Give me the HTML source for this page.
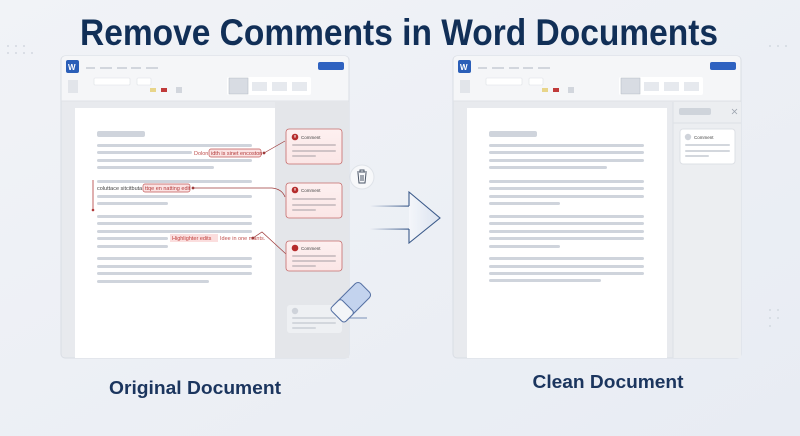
<!DOCTYPE html>
<html><head><meta charset="utf-8"><style>
html,body{margin:0;padding:0;width:800px;height:436px;overflow:hidden;background:#eef1f6}
svg{display:block}
text{font-family:"Liberation Sans",sans-serif}
</style></head><body>
<svg width="800" height="436" viewBox="0 0 800 436" xmlns="http://www.w3.org/2000/svg">
<defs>
<linearGradient id="bg" x1="0" y1="0" x2="1" y2="1"><stop offset="0" stop-color="#f1f3f7"/><stop offset="1" stop-color="#e8ecf3"/></linearGradient>
<linearGradient id="ar" x1="0" y1="0" x2="1" y2="0"><stop offset="0" stop-color="#f4f6fa"/><stop offset="1" stop-color="#dbe3f0"/></linearGradient>
<linearGradient id="al" x1="0" y1="0" x2="1" y2="0"><stop offset="0" stop-color="#3b5a8a" stop-opacity="0"/><stop offset="1" stop-color="#3b5a8a"/></linearGradient>
<linearGradient id="cm" x1="0" y1="0" x2="0" y2="1"><stop offset="0" stop-color="#fdf0f0"/><stop offset="1" stop-color="#fbe6e6"/></linearGradient>
</defs>
<rect width="800" height="436" fill="url(#bg)"/>
<g fill="#d3d8e0">
<circle cx="8" cy="46" r="1"/><circle cx="16" cy="46" r="1"/><circle cx="24" cy="46" r="1"/><circle cx="8" cy="53" r="1"/><circle cx="16" cy="53" r="1"/><circle cx="24" cy="53" r="1"/><circle cx="32" cy="53" r="1"/>
<circle cx="770" cy="46" r="1"/><circle cx="778" cy="46" r="1"/><circle cx="786" cy="46" r="1"/><circle cx="770" cy="310" r="1"/><circle cx="778" cy="310" r="1"/><circle cx="770" cy="318" r="1"/><circle cx="778" cy="318" r="1"/><circle cx="770" cy="326" r="1"/>
</g>
<text x="399" y="45" text-anchor="middle" font-size="37" font-weight="bold" fill="#112f57" textLength="638" lengthAdjust="spacingAndGlyphs">Remove Comments in Word Documents</text>

<!-- LEFT WINDOW -->
<g>
<rect x="61" y="56" width="288" height="302" rx="4" fill="#e8eaee" stroke="#d9dde4"/>
<path d="M61.5 101 V60 a4 4 0 0 1 4 -4 H344.5 a4 4 0 0 1 4 4 V101 Z" fill="#f5f6f8"/>
<line x1="61" y1="101" x2="349" y2="101" stroke="#dfe2e7"/>
<rect x="66" y="60" width="13" height="13" rx="2" fill="#2b5fb8"/><text x="68" y="70" font-size="8" font-weight="bold" fill="#fff">W</text>
<rect x="318" y="62" width="26" height="8" rx="2" fill="#2f62c0"/>
<g stroke="#d2d6dd" stroke-width="2"><line x1="86" y1="68" x2="95" y2="68"/><line x1="100" y1="68" x2="112" y2="68"/><line x1="117" y1="68" x2="127" y2="68"/><line x1="131" y1="68" x2="141" y2="68"/><line x1="146" y1="68" x2="158" y2="68"/></g>
<rect x="68" y="80" width="10" height="13" fill="#e2e5ea"/>
<rect x="94" y="78" width="36" height="7" rx="1" fill="#fff" stroke="#dde0e5" stroke-width=".6"/>
<rect x="137" y="78" width="14" height="7" rx="1" fill="#fff" stroke="#dde0e5" stroke-width=".6"/>
<rect x="150" y="88" width="6" height="4" fill="#e8d58a"/><rect x="161" y="88" width="6" height="4" fill="#c03a3a"/>
<rect x="176" y="87" width="6" height="6" fill="#d2d6dd"/>
<rect x="227" y="77" width="84" height="18" rx="2" fill="#fff"/>
<rect x="229" y="78" width="19" height="16" fill="#d8dce3" stroke="#b9bfc9" stroke-width=".6"/>
<rect x="252" y="82" width="15" height="9" fill="#e6e9ee"/><rect x="272" y="82" width="15" height="9" fill="#e6e9ee"/><rect x="292" y="82" width="15" height="9" fill="#e6e9ee"/>
<rect x="275" y="102" width="74" height="256" fill="#e4e6ea"/>
<rect x="75" y="108" width="200" height="250" fill="#fff"/>
<g fill="#cfd4dc">
<rect x="97" y="131" width="48" height="6" rx="2"/>
<rect x="97" y="144" width="155" height="3" rx="1.5"/><rect x="97" y="151" width="95" height="3" rx="1.5"/><rect x="97" y="159" width="155" height="3" rx="1.5"/><rect x="97" y="166" width="117" height="3" rx="1.5"/>
<rect x="97" y="180" width="155" height="3" rx="1.5"/><rect x="97" y="195" width="155" height="3" rx="1.5"/><rect x="97" y="202" width="71" height="3" rx="1.5"/>
<rect x="97" y="215" width="155" height="3" rx="1.5"/><rect x="97" y="222" width="155" height="3" rx="1.5"/><rect x="97" y="230" width="155" height="3" rx="1.5"/><rect x="97" y="237" width="71" height="3" rx="1.5"/><rect x="97" y="245" width="71" height="3" rx="1.5"/>
<rect x="97" y="257" width="155" height="3" rx="1.5"/><rect x="97" y="265" width="155" height="3" rx="1.5"/><rect x="97" y="272" width="155" height="3" rx="1.5"/><rect x="97" y="280" width="112" height="3" rx="1.5"/>
</g>
<text x="194" y="155" font-size="5.5" fill="#c0504d">Dolon</text>
<rect x="209" y="149" width="52" height="8" rx="2" fill="#fbe3e3" stroke="#c05555" stroke-width=".7"/>
<text x="211" y="155" font-size="5.5" fill="#b23a3a">idth is sinet encoston</text>
<text x="97" y="190" font-size="5.5" fill="#444">coluttace sitcitbuta</text>
<rect x="143" y="184" width="47" height="8" rx="2" fill="#fbe3e3" stroke="#c05555" stroke-width=".7"/>
<text x="145" y="190" font-size="5.5" fill="#b23a3a">ttqe en natting edit</text>
<rect x="170" y="234" width="48" height="8" fill="#fbdede"/>
<text x="172" y="240" font-size="5.5" fill="#c0403d">Highlighter edits</text>
<text x="220" y="240" font-size="5.5" fill="#c0504d">Idee in one mants.</text>
<line x1="93" y1="180" x2="93" y2="210" stroke="#b03a3a" stroke-width=".8"/><circle cx="93" cy="210" r="1.3" fill="#b03a3a"/>
<g stroke="#9e3b3b" stroke-width=".7" fill="none">
<path d="M264 153 L285 141"/><path d="M193 188 L272 188 Q282 189 285 197"/><path d="M253 238 L262 232 L286 254"/>
</g>
<circle cx="264" cy="153" r="1.4" fill="#9e3b3b"/><circle cx="193" cy="188" r="1.4" fill="#9e3b3b"/><circle cx="253" cy="238" r="1.4" fill="#9e3b3b"/>
<g stroke="#c56b6b" stroke-width=".8" fill="url(#cm)">
<rect x="286" y="129" width="56" height="35" rx="3"/><rect x="286" y="183" width="56" height="35" rx="3"/><rect x="286" y="241" width="56" height="30" rx="3"/>
</g>
<g fill="#b52c2c"><circle cx="295" cy="137" r="3.3"/><circle cx="295" cy="190" r="3.3"/><circle cx="295" cy="248" r="3.3"/></g>
<g fill="#fff"><rect x="294.5" y="135" width="1" height="2.6"/><rect x="294.5" y="188" width="1" height="2.6"/></g>
<g font-size="4.5" fill="#444"><text x="301" y="139">Comment</text><text x="301" y="192">Comment</text><text x="301" y="250">Comment</text><text x="301" y="313">Comment</text></g>
<g fill="#d0c3c6">
<rect x="292" y="144" width="44" height="2" rx="1"/><rect x="292" y="150" width="44" height="2" rx="1"/><rect x="292" y="155" width="24" height="2" rx="1"/>
<rect x="292" y="198" width="44" height="2" rx="1"/><rect x="292" y="204" width="44" height="2" rx="1"/><rect x="292" y="209" width="24" height="2" rx="1"/>
<rect x="292" y="255" width="44" height="2" rx="1"/><rect x="292" y="260" width="44" height="2" rx="1"/><rect x="292" y="265" width="24" height="2" rx="1"/>
</g>
<rect x="287" y="305" width="55" height="28" rx="3" fill="#eef0f3"/>
<circle cx="295" cy="311" r="3.2" fill="#cfd3da"/>
<g fill="#d3d7dd"><rect x="292" y="317" width="44" height="2" rx="1"/><rect x="292" y="322" width="44" height="2" rx="1"/><rect x="292" y="327" width="24" height="2" rx="1"/></g>
</g>
<!-- trash -->
<circle cx="362" cy="177" r="12" fill="#f7f8fa" stroke="#dfe3e9"/>
<g stroke="#4a5566" stroke-width="1" fill="none"><path d="M357 172 H367 M360 172 V170 H364 V172 M358 173 L359 183 H365 L366 173 M361 175 V181 M363 175 V181"/></g>
<!-- eraser -->
<line x1="345" y1="318" x2="367" y2="318" stroke="#5570a3" stroke-width=".8"/>
<g transform="translate(351 302) rotate(-45)">
<rect x="-20" y="-10" width="40" height="20" rx="4" fill="#c3d3ee" stroke="#5570a3" stroke-width="1"/>
<rect x="-20" y="-10" width="15" height="20" rx="3" fill="#f3f5f8" stroke="#5570a3" stroke-width="1"/>
</g>
<!-- arrow -->
<rect x="370" y="205.5" width="40" height="1.2" fill="url(#al)"/>
<rect x="370" y="228.5" width="40" height="1.2" fill="url(#al)"/>
<path d="M409 206 V192 L440 218 L409 243 V229" fill="url(#ar)" stroke="#3b5a8a" stroke-width="1.1"/>

<!-- RIGHT WINDOW -->
<g>
<rect x="453" y="56" width="288" height="302" rx="4" fill="#e8eaee" stroke="#d9dde4"/>
<path d="M453.5 101 V60 a4 4 0 0 1 4 -4 H736.5 a4 4 0 0 1 4 4 V101 Z" fill="#f5f6f8"/>
<line x1="453" y1="101" x2="741" y2="101" stroke="#dfe2e7"/>
<rect x="458" y="60" width="13" height="13" rx="2" fill="#2b5fb8"/><text x="460" y="70" font-size="8" font-weight="bold" fill="#fff">W</text>
<rect x="710" y="62" width="26" height="8" rx="2" fill="#2f62c0"/>
<g stroke="#d2d6dd" stroke-width="2"><line x1="478" y1="68" x2="487" y2="68"/><line x1="492" y1="68" x2="504" y2="68"/><line x1="509" y1="68" x2="519" y2="68"/><line x1="523" y1="68" x2="533" y2="68"/><line x1="538" y1="68" x2="550" y2="68"/></g>
<rect x="460" y="80" width="10" height="13" fill="#e2e5ea"/>
<rect x="486" y="78" width="36" height="7" rx="1" fill="#fff" stroke="#dde0e5" stroke-width=".6"/>
<rect x="529" y="78" width="14" height="7" rx="1" fill="#fff" stroke="#dde0e5" stroke-width=".6"/>
<rect x="542" y="88" width="6" height="4" fill="#e8d58a"/><rect x="553" y="88" width="6" height="4" fill="#c03a3a"/>
<rect x="568" y="87" width="6" height="6" fill="#d2d6dd"/>
<rect x="619" y="77" width="84" height="18" rx="2" fill="#fff"/>
<rect x="621" y="78" width="19" height="16" fill="#d8dce3" stroke="#b9bfc9" stroke-width=".6"/>
<rect x="644" y="82" width="15" height="9" fill="#e6e9ee"/><rect x="664" y="82" width="15" height="9" fill="#e6e9ee"/><rect x="684" y="82" width="15" height="9" fill="#e6e9ee"/>
<rect x="673" y="102" width="68" height="256" fill="#eceef1"/>
<line x1="673" y1="123" x2="741" y2="123" stroke="#dde0e5"/>
<line x1="673" y1="102" x2="673" y2="358" stroke="#dde0e5"/>
<rect x="679" y="108" width="32" height="7" rx="2" fill="#cfd4db"/>
<path d="M732 109 L737 114 M737 109 L732 114" stroke="#9aa2ad" stroke-width=".8"/>
<rect x="680" y="129" width="55" height="35" rx="3" fill="#fff" stroke="#dde0e5"/>
<circle cx="688" cy="137" r="3.2" fill="#cfd3da"/>
<text x="694" y="139" font-size="4.5" fill="#444">Comment</text>
<g fill="#d3d7dd"><rect x="685" y="144" width="45" height="2" rx="1"/><rect x="685" y="150" width="45" height="2" rx="1"/><rect x="685" y="155" width="24" height="2" rx="1"/></g>
<rect x="467" y="108" width="200" height="250" fill="#fff"/>
<g fill="#cfd4dc">
<rect x="489" y="131" width="48" height="6" rx="2"/>
<rect x="489" y="144" width="155" height="3" rx="1.5"/><rect x="489" y="151" width="155" height="3" rx="1.5"/><rect x="489" y="159" width="155" height="3" rx="1.5"/><rect x="489" y="166" width="118" height="3" rx="1.5"/>
<rect x="489" y="180" width="155" height="3" rx="1.5"/><rect x="489" y="187" width="155" height="3" rx="1.5"/><rect x="489" y="195" width="155" height="3" rx="1.5"/><rect x="489" y="202" width="71" height="3" rx="1.5"/>
<rect x="489" y="215" width="155" height="3" rx="1.5"/><rect x="489" y="222" width="155" height="3" rx="1.5"/><rect x="489" y="230" width="155" height="3" rx="1.5"/><rect x="489" y="237" width="155" height="3" rx="1.5"/><rect x="489" y="245" width="71" height="3" rx="1.5"/>
<rect x="489" y="257" width="155" height="3" rx="1.5"/><rect x="489" y="265" width="155" height="3" rx="1.5"/><rect x="489" y="272" width="155" height="3" rx="1.5"/><rect x="489" y="279" width="112" height="3" rx="1.5"/>
</g>
</g>
<text x="195" y="394" text-anchor="middle" font-size="18" font-weight="bold" fill="#1b355e" textLength="172" lengthAdjust="spacingAndGlyphs">Original Document</text>
<text x="608" y="388" text-anchor="middle" font-size="18" font-weight="bold" fill="#1b355e" textLength="151" lengthAdjust="spacingAndGlyphs">Clean Document</text>
</svg>
</body></html>
